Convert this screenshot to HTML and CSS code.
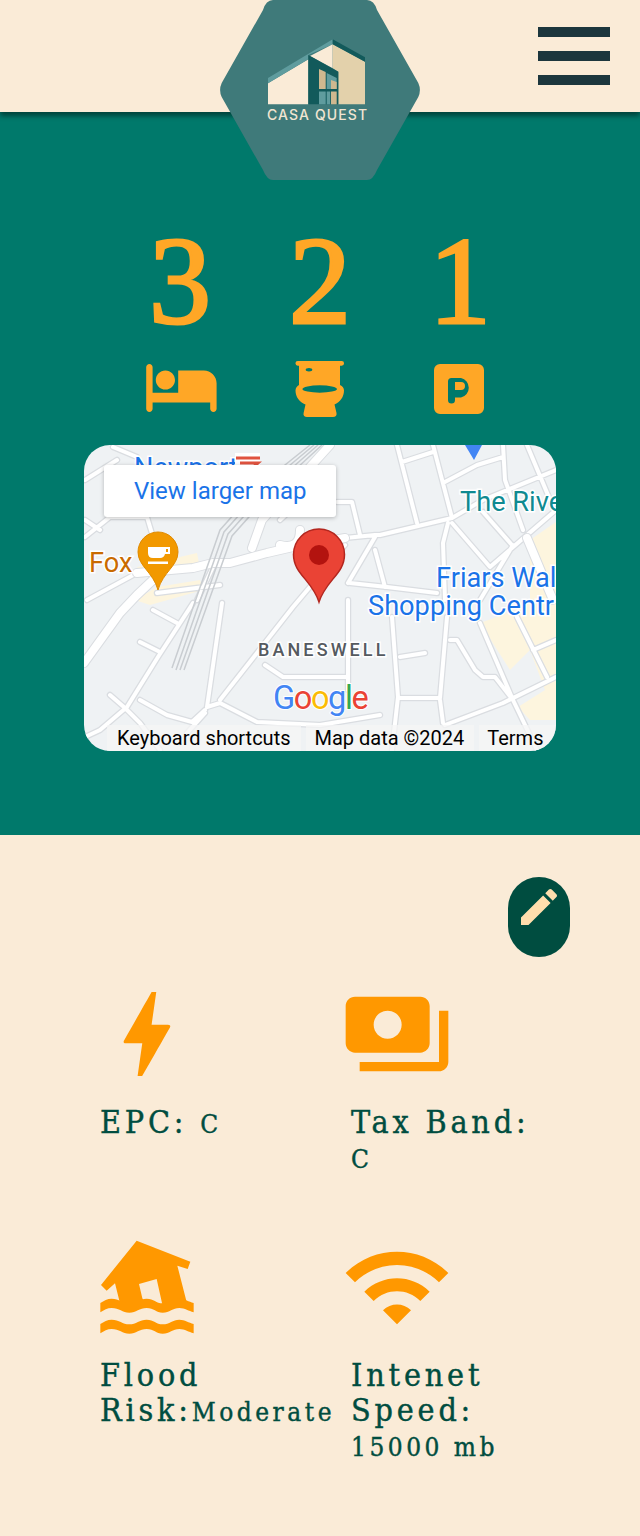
FILE: index.html
```html
<!DOCTYPE html>
<html lang="en">
<head>
<meta charset="utf-8">
<title>Casa Quest</title>
<link rel="stylesheet" href="styles.css">
</head>
<body>
<header class="topbar">
  <button class="burger" aria-label="Menu"><span></span><span></span><span></span></button>
</header>
<svg class="logo" viewBox="220 0 200 180" aria-label="Casa Quest logo">
  <path class="hex" d="M273 0H367Q374 0 377 10L418.300 83Q421.500 90 418.300 97L377 170Q373 180 367 180H273Q267 180 263 170L221.700 97Q218.500 90 221.700 83L263 10Q266 0 273 0Z"/>
  <path class="l-cream" d="M268 83.300L308.300 59.300V104.300H268Z"/>
  <path class="l-teal" d="M268 78L332.700 39.300V44.300L308.300 55V59.300L268 83.300Z"/>
  <path class="l-cream" d="M310 56L332.700 44.300V68.300Z"/>
  <path class="l-beige" d="M332.700 44.300L365 61.700V104.300H338.300V71.700L332.700 68.300Z"/>
  <path class="l-dark" d="M332.700 39.300L365 57.300V61.700L332.700 44.300Z"/>
  <path class="l-dark" d="M308.300 55L338.300 71.700V104.300H308.300Z"/>
  <path class="l-pane" d="M319 69L325.700 72V89H319Z"/>
  <path class="l-teal" d="M326.700 73L336.700 78V89H326.700Z"/>
  <path class="l-pane" d="M331 80L336.700 82V89H331Z"/>
  <rect class="l-teal" x="319" y="91.500" width="6.700" height="12.800"/>
  <rect class="l-teal" x="326.700" y="91.500" width="3.500" height="12.800"/>
  <rect class="l-pane" x="331" y="91.500" width="5.700" height="12.800"/>
  <text class="logo-text" x="267" y="120">CASA QUEST</text>
</svg>

<section class="hero">
  <div class="stats">
    <div class="digit">3</div>
    <div class="digit">2</div>
    <div class="digit">1</div>
    <svg class="stat-icon bed" viewBox="0 0 24 24"><path d="M7 13c1.660 0 3-1.340 3-3S8.660 7 7 7s-3 1.340-3 3 1.340 3 3 3zm12-6h-8v7H3V6c0-.55-.45-1-1-1s-1 .45-1 1v13c0 .55.45 1 1 1s1-.45 1-1v-2h18v2c0 .55.45 1 1 1s1-.45 1-1v-8c0-2.210-1.790-4-4-4z"/></svg>
    <svg class="stat-icon toilet" viewBox="0 0 50 56"><path fill-rule="evenodd" d="M2.800 0H46.700A2.300 2.300 0 0 1 46.700 4.700H45V24C47.500 25 49 27 49 29.500 49 36 45 41 39.500 43.500L41.500 52C42 54.500 40.500 56 38 56H12C9.500 56 8 54.500 8.600 52L10.500 43.500C4.500 41 0.500 36 0.500 29.500 0.500 27 2 25 4 24V4.700H2.800A2.300 2.300 0 0 1 2.800 0ZM14 7A3.300 1.700 0 1 0 14 10.400 3.300 1.700 0 1 0 14 7ZM24.700 24.300A17.300 3.700 0 1 0 24.700 31.700 17.300 3.700 0 1 0 24.700 24.300Z"/></svg>
    <svg class="stat-icon parking" viewBox="0 0 50 50"><path fill-rule="evenodd" d="M6 0H44A6 6 0 0 1 50 6V44A6 6 0 0 1 44 50H6A6 6 0 0 1 0 44V6A6 6 0 0 1 6 0ZM17.500 14A3.500 3.500 0 0 0 14 17.500V36A3.500 3.500 0 0 0 21 36V33.500H27A10 10 0 0 0 27 14ZM21 18H27A4 4 0 0 1 27 26H21Z"/></svg>
  </div>

  <div class="map">
    <svg class="map-canvas" viewBox="84 445 472 306">
      <defs>
        <path id="minor" d="M85 480L117 460M113 447L137 457M85 537L110 517 147 517 153 537M85 520L100 530M87 600L137 573M157 593L220 585M197 600L213 567M280 520L320 483M397 445L417 523M433 445L452 518M402 462L433 452M443 483L477 465 503 457M380 535L452 518 483 500 556 470M503 445L505 480 523 530M483 512L512 545M452 523L490 567M490 567L556 510M448 523L443 543 445 600M345 538L375 535 380 535M337 502L352 502 360 535M375 537L348 583M375 550L385 587M350 583L387 587 437 593M527 445L553 507M153 610L177 623M140 642L160 652M193 603L158 657 127 707 100 730 85 737M110 695L125 708 140 723 160 750M140 700L167 715 192 722 205 710M222 603L207 707M207 707L220 703 257 722 320 725M220 700L293 607M265 665L283 677 348 677M348 600V690M392 617L398 697 392 750M398 698H440L447 617M440 700L443 723M450 640H457L475 670 483 677 495 677 513 700M400 657L425 653M503 703L445 725M503 703L556 677M480 623L513 700 537 750M517 617L547 677M533 650L556 640M513 545L480 600M293 607L320 575 345 545M205 713L187 733M320 725L380 715"/>
        <path id="major" d="M84 663L120 613 137 595 155 578M137 573L193 568 213 563 230 563 267 553 293 547 345 538M252 548L262 520 330 445M280 545Q300 550 300 530M527 538L553 600"/>
      </defs>
      <rect class="m-bg" x="84" y="445" width="472" height="306"/>
      <path class="m-area" d="M137 567L197 553 200 568 140 573ZM135 600L157 587 200 580 203 590 150 605ZM530 540L556 522V720H530L518 707 545 690 530 650 510 670 480 623 516 610 530 600Z"/>
      <use class="road-case" href="#minor"/>
      <use class="road-fill" href="#minor"/>
      <use class="major-case" href="#major"/>
      <use class="major-fill" href="#major"/>
      <path class="m-rail" d="M172 668L220 530 260 485 310 445M176 670L224 532 264 487 314 445M180 670L228 534 268 489 318 445M184 670L232 536 272 491 322 445"/>
      <text class="m-label m-blue" x="134" y="477">Newport</text>
      <rect class="m-white" x="235" y="453" width="25" height="18"/>
      <path class="m-rail-icon" d="M236 458H260M240 463H258L250 470"/>
      <text class="m-label m-teal" x="460" y="511">The Rive</text>
      <text class="m-label m-blue" x="436" y="587">Friars Wal</text>
      <text class="m-label m-blue" x="368" y="615">Shopping Centr</text>
      <text class="m-label m-orange" x="89" y="572">Fox</text>
      <text class="m-area-label" x="258" y="656">BANESWELL</text>
      <text class="m-google" x="273" y="709"><tspan class="g-blue">G</tspan><tspan class="g-red">o</tspan><tspan class="g-yellow">o</tspan><tspan class="g-blue">g</tspan><tspan class="g-green">l</tspan><tspan class="g-red">e</tspan></text>
      <path class="m-fox" d="M158 532A20 20 0 0 1 178 552C178 566 163 572 158 590 153 572 138 566 138 552A20 20 0 0 1 158 532Z"/>
      <path class="m-cup" fill-rule="evenodd" d="M148 547H170V554H165Q164 558 160 558H153Q148 558 148 553ZM166 549H168V552H166ZM148 561.500H168V564H148Z"/>
      <path class="m-blue-pin" d="M465 445H482L474 460Z"/>
      <path class="m-pin" d="M319 529A25.500 25.500 0 0 1 344.500 554.500C344.500 574 326 580 319 602 312 580 293.500 574 293.500 554.500A25.500 25.500 0 0 1 319 529Z"/>
      <circle class="m-pin-dot" cx="319" cy="555" r="10"/>
    </svg>
    <a class="map-link">View larger map</a>
    <div class="map-foot">
      <span class="foot-a">Keyboard shortcuts</span>
      <span class="foot-b">Map data ©2024</span>
      <span class="foot-c">Terms</span>
    </div>
  </div>
</section>

<section class="details">
  <div class="edit-row">
    <button class="edit" aria-label="Edit">
      <svg viewBox="0 0 24 24"><path d="M3 17.250V21h3.750L17.810 9.940l-3.750-3.750L3 17.250zM20.710 7.040c.39-.39.39-1.020 0-1.410l-2.340-2.340c-.39-.39-1.020-.39-1.410 0l-1.830 1.830 3.750 3.750 1.830-1.830z"/></svg>
    </button>
  </div>
  <div class="facts">
    <div class="fact">
      <svg class="fact-icon" viewBox="-0.2 0 24 24"><path d="M11 21h-1l1-7H7.500c-.58 0-.57-.32-.38-.66.19-.34.05-.08.07-.12C8.480 10.940 10.420 7.540 13 3h1l-1 7h3.500c.49 0 .56.33.47.51l-.07.15C12.960 17.550 11 21 11 21z"/></svg>
      <p class="fact-text">EPC: <span class="fact-value">C</span></p>
    </div>
    <div class="fact">
      <svg class="fact-icon" viewBox="0 0 24 24"><path d="M19 14V6c0-1.100-.9-2-2-2H3c-1.100 0-2 .9-2 2v8c0 1.100.9 2 2 2h14c1.100 0 2-.9 2-2zm-9-1c-1.660 0-3-1.340-3-3s1.340-3 3-3 3 1.340 3 3-1.340 3-3 3zm13-6v11c0 1.100-.9 2-2 2H4v-2h17V7h2z"/></svg>
      <p class="fact-text">Tax Band: <span class="fact-value">C</span></p>
    </div>
    <div class="fact">
      <svg class="fact-icon" viewBox="0 3 336 336"><path fill-rule="evenodd" d="M140 32L301 95 293 117 262 107 293 228H92L75 160 50 182 33 165ZM147 162L200 147 218 228H170L157 205Z"/><path id="wave" d="M31 219C42 212 52 206 65 206 88 206 97 220 118 220 139 220 148 206 170 206 192 206 198 220 218 220 239 220 248 206 268 206 285 206 296 215 311 219V247C296 243 285 234 268 234 248 234 239 248 218 248 198 248 192 234 170 234 148 234 139 248 118 248 97 248 88 234 65 234 52 234 42 240 31 247Z"/><use href="#wave" y="63"/></svg>
      <p class="fact-text">Flood Risk:<span class="fact-value">Moderate</span></p>
    </div>
    <div class="fact">
      <svg class="fact-icon" viewBox="0 0 24 24"><path d="M1 9l2 2c4.970-4.970 13.030-4.970 18 0l2-2C16.930 2.930 7.080 2.930 1 9zm8 8l3 3 3-3c-1.650-1.660-4.340-1.660-6 0zm-4-4l2 2c2.760-2.760 7.240-2.760 10 0l2-2C15.140 9.140 8.870 9.140 5 13z"/></svg>
      <p class="fact-text">Intenet Speed: <span class="fact-value">15000 mb</span></p>
    </div>
  </div>
</section>
</body>
</html>
```
FILE: styles.css
```css
* { box-sizing: border-box; }
html, body { margin: 0; padding: 0; }
body {
  position: relative;
  width: 640px;
  height: 1536px;
  overflow: hidden;
  background: #faebd7;
  font-family: "Liberation Serif", serif;
}

.topbar {
  position: relative;
  z-index: 1;
  height: 112px;
  display: flex;
  justify-content: flex-end;
  padding: 27px 30px 0 0;
  background: #faebd7;
  box-shadow: 0 4px 5px rgba(0, 0, 0, 0.45);
}
.burger {
  display: flex;
  flex-direction: column;
  gap: 14px;
  width: 72px;
  height: 58px;
  padding: 0;
  border: 0;
  background: none;
}
.burger span { display: block; width: 72px; height: 10px; background: #1c363d; }

.logo { position: absolute; z-index: 2; left: 220px; top: 0; width: 200px; height: 180px; }
.hex { fill: #3f7a7a; }
.l-cream { fill: #faebd7; }
.l-teal { fill: #5f9c9e; }
.l-beige { fill: #e3d1ab; }
.l-dark { fill: #125a5b; }
.l-pane { fill: #cfb88f; }
.logo-text {
  font-family: "Inter", sans-serif;
  font-size: 14px;
  font-weight: 500;
  letter-spacing: 1.100px;
  fill: #f1e5d2;
}

.hero { height: 723px; padding-top: 108px; background: #00796b; }
.stats {
  display: grid;
  grid-template-columns: repeat(3, 140px);
  justify-content: center;
  justify-items: center;
}
.digit {
  height: 126px;
  font-size: 124px;
  line-height: 124px;
  color: #ffa726;
  -webkit-text-stroke: 3px #ffa726;
}
.stat-icon { display: block; fill: #ffa726; margin-top: 2px; }
.bed { width: 76.8px; height: 76.8px; margin-left: 2px; }
.toilet { width: 50px; height: 56px; margin-top: 15px; }
.parking { width: 50px; height: 50px; margin-top: 18px; margin-right: 2px; }

.map {
  position: relative;
  width: 472px;
  height: 306px;
  margin: 20px auto 0;
  border-radius: 26px;
  overflow: hidden;
  font-family: "Roboto", sans-serif;
}
.map-canvas { display: block; width: 472px; height: 306px; }
.m-bg { fill: #eff2f4; }
.m-area { fill: #fdf5de; }
.road-case, .road-fill, .major-case, .major-fill { fill: none; stroke-linejoin: round; stroke-linecap: round; }
.road-case { stroke: #dadde1; stroke-width: 6.500px; }
.road-fill { stroke: #fff; stroke-width: 4px; }
.major-case { stroke: #dadde1; stroke-width: 10px; }
.major-fill { stroke: #fff; stroke-width: 8px; }
.m-rail { fill: none; stroke: #c9cdd1; stroke-width: 1.500px; }
.m-label { font-size: 27.200px; stroke: #fff; stroke-width: 3px; paint-order: stroke; }
.m-blue { fill: #1a73e8; }
.m-teal { fill: #0f8a91; }
.m-orange { fill: #c96a00; }
.m-white { fill: #fff; }
.m-rail-icon { fill: none; stroke: #e0533f; stroke-width: 3px; }
.m-area-label {
  font-size: 18px;
  font-weight: 500;
  letter-spacing: 3.100px;
  fill: #555a60;
  stroke: #fff;
  stroke-width: 3px;
  paint-order: stroke;
}
.m-google { font-size: 32.500px; font-weight: 400; letter-spacing: -1.400px; stroke: #fff; stroke-width: 2px; paint-order: stroke; }
.g-blue { fill: #4285f4; }
.g-red { fill: #ea4335; }
.g-yellow { fill: #fbbc05; }
.g-green { fill: #34a853; }
.m-fox { fill: #f29900; stroke: #e08a00; stroke-width: 1px; }
.m-cup { fill: #fff; }
.m-blue-pin { fill: #4285f4; }
.m-pin { fill: #ea4335; stroke: #b3261e; stroke-width: 1.500px; }
.m-pin-dot { fill: #b3130f; }

.map-link {
  position: absolute;
  left: 20px;
  top: 20px;
  width: 232px;
  height: 52px;
  padding-left: 30px;
  line-height: 52px;
  font-size: 24px;
  color: #1a73e8;
  background: #fff;
  border-radius: 3px;
  box-shadow: 0 1px 4px rgba(0, 0, 0, 0.25);
}
.map-foot {
  position: absolute;
  left: 0;
  right: 0;
  bottom: 0;
  height: 26px;
  display: flex;
  font-size: 20px;
  line-height: 26px;
  color: #000;
}
.map-foot span { background: rgba(245, 245, 245, 0.75); }
.foot-a { margin-left: 23px; padding: 0 10px; margin-right: 5px; }
.foot-b { padding: 0 10px 0 9px; margin-right: 5px; }
.foot-c { flex: 1; padding-left: 8px; }

.details { padding-top: 42px; }
.edit-row { display: flex; justify-content: flex-end; padding-right: 70px; }
.edit {
  width: 62px;
  height: 80px;
  padding: 0;
  border: 0;
  border-radius: 31px;
  background: #004d40;
}
.edit svg { display: block; width: 48px; height: 48px; margin: 6px 0 26px 7px; fill: #ffdead; }

.facts {
  display: grid;
  grid-template-columns: 251px 251px;
  row-gap: 54px;
  margin-top: 21px;
  padding-left: 90px;
}
.fact-icon { display: block; width: 112px; height: 112px; fill: #ff9800; }
.fact-text {
  width: 190px;
  margin: 15px 0 0 10px;
  font-family: "DejaVu Serif Condensed", "DejaVu Serif", serif;
  font-size: 32px;
  line-height: 35px;
  letter-spacing: 3.800px;
  color: #004d40;
  -webkit-text-stroke: 0.4px #004d40;
}
.fact-value { font-size: 26px; letter-spacing: 3.500px; }
```
